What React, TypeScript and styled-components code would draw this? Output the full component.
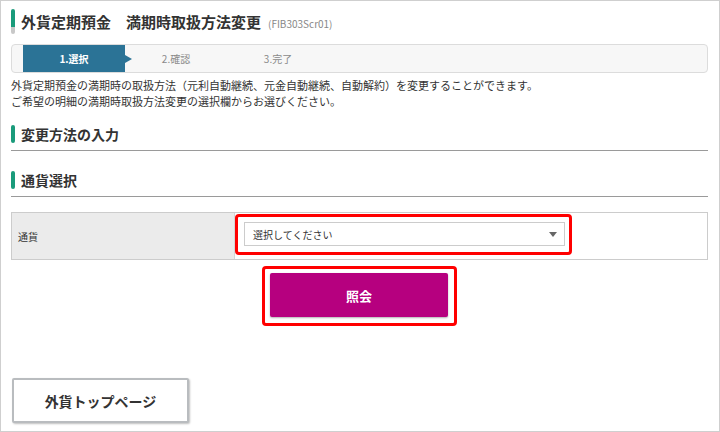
import styled, { createGlobalStyle } from 'styled-components';

const GlobalStyle = createGlobalStyle`
  html, body {
    margin: 0;
    padding: 0;
    background: #fff;
  }
  body {
    font-family: "Noto Sans CJK JP", "Noto Sans", sans-serif;
    color: #333;
  }
`;

const steps = ['1.選択', '2.確認', '3.完了'];

const App = () => {
  return (
    <>
      <GlobalStyle />
      <Page>
        <TitleRow>
          <TitleBar />
          <Title>外貨定期預金　満期時取扱方法変更</Title>
          <ScreenCode>(FIB303Scr01)</ScreenCode>
        </TitleRow>

        <Stepper>
          {steps.map((s, i) => (
            <Step key={s} $active={i === 0}>
              {s}
            </Step>
          ))}
        </Stepper>

        <Description>
          外貨定期預金の満期時の取扱方法（元利自動継続、元金自動継続、自動解約）を変更することができます。
          <br />
          ご希望の明細の満期時取扱方法変更の選択欄からお選びください。
        </Description>

        <SectionHeading $top={16}>
          <HeadingBar />
          <HeadingText>変更方法の入力</HeadingText>
        </SectionHeading>

        <SectionHeading $top={20}>
          <HeadingBar />
          <HeadingText>通貨選択</HeadingText>
        </SectionHeading>

        <FormTable>
          <LabelCell>通貨</LabelCell>
          <ValueCell>
            <SelectHighlight>
              <SelectBox>
                <span>選択してください</span>
                <Caret />
              </SelectBox>
            </SelectHighlight>
          </ValueCell>
        </FormTable>

        <ButtonRow>
          <ButtonHighlight>
            <PrimaryButton>照会</PrimaryButton>
          </ButtonHighlight>
        </ButtonRow>

        <BackButton>外貨トップページ</BackButton>
      </Page>
    </>
  );
};

const Page = styled.div`
  box-sizing: border-box;
  width: 720px;
  height: 432px;
  border: 1px solid #cfcfcf;
  padding: 8px 11px 0 10px;
  display: flex;
  flex-direction: column;
  overflow: hidden;
`;

const TitleRow = styled.div`
  display: flex;
  align-items: center;
  height: 25px;
`;

const TitleBar = styled.div`
  width: 4px;
  height: 25px;
  border-radius: 2px;
  background: linear-gradient(#1a9b7b 0 72%, #c8c8c8 72% 100%);
`;

const Title = styled.div`
  margin-left: 6px;
  font-size: 15px;
  font-weight: bold;
  line-height: 25px;
  color: #333;
`;

const ScreenCode = styled.div`
  margin-left: 7px;
  padding-top: 3px;
  font-size: 10px;
  color: #888;
`;

const Stepper = styled.div`
  box-sizing: border-box;
  margin-top: 10px;
  height: 29px;
  border: 1px solid #dcdcdc;
  border-radius: 4px;
  background: #f7f7f7;
  display: flex;
  padding-left: 11px;
`;

const Step = styled.div<{ $active: boolean }>`
  position: relative;
  width: 102px;
  height: 100%;
  display: flex;
  align-items: center;
  justify-content: center;
  font-size: 10px;
  font-weight: ${(p) => (p.$active ? 'bold' : 'normal')};
  color: ${(p) => (p.$active ? '#fff' : '#8a8a8a')};
  background: ${(p) => (p.$active ? '#2b7396' : 'transparent')};

  &::after {
    content: '';
    display: ${(p) => (p.$active ? 'block' : 'none')};
    position: absolute;
    right: -7px;
    top: 50%;
    margin-top: -4px;
    border-top: 4px solid transparent;
    border-bottom: 4px solid transparent;
    border-left: 7px solid #2b7396;
  }
`;

const Description = styled.div`
  margin-top: 4px;
  font-size: 11px;
  line-height: 16px;
  color: #333;
`;

const SectionHeading = styled.div<{ $top: number }>`
  margin-top: ${(p) => p.$top}px;
  display: flex;
  align-items: center;
  padding-bottom: 7px;
  border-bottom: 1px solid #9a9a9a;
`;

const HeadingBar = styled.div`
  width: 4px;
  height: 18px;
  border-radius: 2px;
  background: #1a9b7b;
`;

const HeadingText = styled.div`
  margin-left: 6px;
  font-size: 14px;
  font-weight: bold;
  line-height: 18px;
  color: #333;
`;

const FormTable = styled.div`
  box-sizing: border-box;
  margin-top: 15px;
  height: 48px;
  border: 1px solid #cccccc;
  display: grid;
  grid-template-columns: 223px 1fr;
`;

const LabelCell = styled.div`
  background: #ebebeb;
  border-right: 1px solid #d6d6d6;
  padding-left: 6px;
  display: flex;
  align-items: center;
  font-size: 10px;
  color: #333;
`;

const ValueCell = styled.div`
  padding: 1px 0 4px 0;
  display: flex;
  align-items: flex-start;
`;

const Highlight = styled.div`
  box-sizing: border-box;
  border: 3px solid #ff0000;
  border-radius: 4px;
`;

const SelectHighlight = styled(Highlight)`
  width: 337px;
  height: 41px;
  padding: 5px 4px 6px 6px;
`;

const SelectBox = styled.div`
  box-sizing: border-box;
  height: 24px;
  border: 1px solid #cccccc;
  background: #fff;
  display: flex;
  align-items: center;
  justify-content: space-between;
  padding: 0 7px 0 8px;
  font-size: 10px;
  color: #333;
`;

const Caret = styled.span`
  width: 0;
  height: 0;
  border-left: 4px solid transparent;
  border-right: 4px solid transparent;
  border-top: 5px solid #666;
`;

const ButtonRow = styled.div`
  margin-top: 6px;
  display: flex;
  justify-content: center;
`;

const ButtonHighlight = styled(Highlight)`
  padding: 4px 6px 6px 5px;
`;

const PrimaryButton = styled.button`
  display: block;
  width: 178px;
  height: 44px;
  border: none;
  border-radius: 2px;
  background: #b6007f;
  color: #fff;
  font-family: inherit;
  font-size: 13px;
  font-weight: bold;
  box-shadow: 0 1px 2px rgba(0, 0, 0, 0.3);
`;

const BackButton = styled.button`
  box-sizing: border-box;
  margin-top: 52px;
  margin-left: 1px;
  width: 177px;
  height: 45px;
  border: 2px solid #b9bcbf;
  border-radius: 2px;
  background: #fff;
  color: #333;
  font-family: inherit;
  font-size: 14px;
  font-weight: bold;
  box-shadow: 1px 1px 2px rgba(0, 0, 0, 0.25);
`;

export default App;
